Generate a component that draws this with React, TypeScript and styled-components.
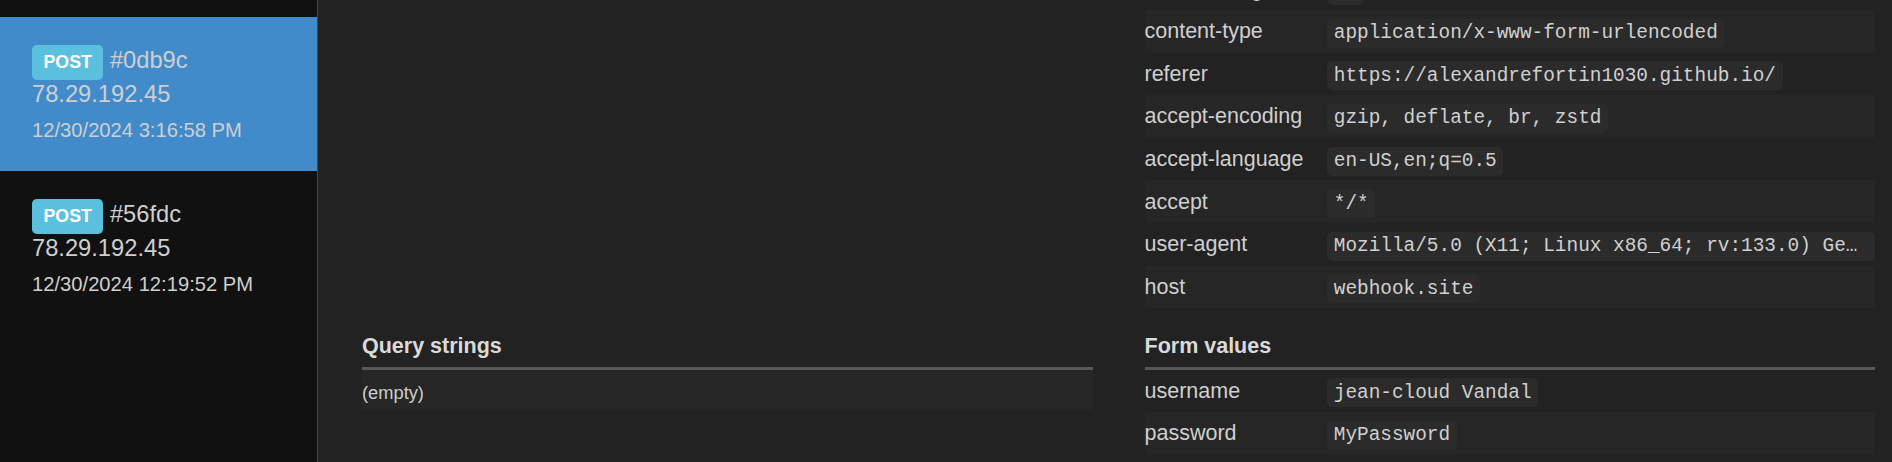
import React from "react";
import styled, { createGlobalStyle } from "styled-components";

const GlobalStyle = createGlobalStyle`
  html, body {
    margin: 0;
    padding: 0;
    background: #222;
  }
  body {
    font-family: "Liberation Sans", Arial, Helvetica, sans-serif;
    color: #ccc;
    overflow: hidden;
  }
`;

const Layout = styled.div`
  display: flex;
  width: 1892px;
  height: 462px;
  overflow: hidden;
`;

const Sidebar = styled.aside`
  box-sizing: border-box;
  width: 318px;
  flex: none;
  height: 100%;
  background: #111;
  border-right: 1px solid #474747;
  padding-top: 17px;
`;

const RequestItem = styled.a<{ $active?: boolean }>`
  display: block;
  box-sizing: border-box;
  height: 154px;
  padding: 28px 0 0 32px;
  background: ${(p) => (p.$active ? "#428bca" : "transparent")};
  color: #cfcfcf;
  text-decoration: none;
`;

const ItemHead = styled.div`
  display: flex;
  align-items: baseline;
  gap: 6.5px;
`;

const MethodBadge = styled.span`
  display: inline-block;
  height: 35px;
  line-height: 35px;
  padding: 0 11.5px;
  border-radius: 4.8px;
  background: #5bc0de;
  color: #fff;
  font-weight: bold;
  font-size: 17.8px;
`;

const RequestId = styled.span`
  font-size: 23.7px;
  line-height: 1;
`;

const RequestIp = styled.div`
  font-size: 23.7px;
  line-height: 28px;
`;

const RequestDate = styled.div`
  font-size: 20.2px;
  line-height: 28px;
  margin-top: 7.6px;
`;

const Main = styled.main`
  flex: 1;
  min-width: 0;
  height: 100%;
  background: #222;
  padding: 0 17px 0 44px;
  overflow: hidden;
`;

const DetailGrid = styled.div`
  display: grid;
  grid-template-columns: 1fr 1fr;
  column-gap: 52px;
  margin-top: -32.6px;
`;

const Section = styled.section`
  margin-top: 26.7px;
  min-width: 0;
`;

const SectionTitle = styled.h4`
  margin: 0;
  font-size: 21.5px;
  font-weight: bold;
  line-height: 23.65px;
  padding-bottom: 8.1px;
  border-bottom: 3px solid #585858;
  color: #dadada;
`;

const KvTable = styled.div`
  min-width: 0;
`;

const KvRow = styled.div`
  display: flex;
  align-items: flex-start;
  box-sizing: border-box;
  height: 42.6px;
  padding-top: 6.3px;
  &:nth-child(even) {
    background: #262626;
  }
`;

const KvKey = styled.div`
  flex: none;
  width: 182.7px;
  font-size: 21.5px;
  line-height: 30px;
  color: #cfcfcf;
`;

const KvValue = styled.div`
  flex: 1;
  min-width: 0;
  display: flex;
`;

const Code = styled.code`
  min-width: 0;
  margin-top: 2.5px;
  font-family: "Liberation Mono", "Courier New", monospace;
  font-size: 19.4px;
  line-height: 22px;
  padding: 3.5px 6.6px;
  border-radius: 5px;
  background: #2b2b2b;
  color: #d0d0d0;
  white-space: nowrap;
  overflow: hidden;
  text-overflow: ellipsis;
`;

const EmptyRow = styled.div`
  box-sizing: border-box;
  height: 40.7px;
  padding-top: 8.5px;
  background: #262626;
  font-size: 18.3px;
  line-height: 30px;
  color: #cfcfcf;
`;

type Req = { id: string; ip: string; date: string; active?: boolean };

const requests: Req[] = [
  { id: "#0db9c", ip: "78.29.192.45", date: "12/30/2024 3:16:58 PM", active: true },
  { id: "#56fdc", ip: "78.29.192.45", date: "12/30/2024 12:19:52 PM" },
];

const headers: [string, string][] = [
  ["content-length", "46"],
  ["content-type", "application/x-www-form-urlencoded"],
  ["referer", "https://alexandrefortin1030.github.io/"],
  ["accept-encoding", "gzip, deflate, br, zstd"],
  ["accept-language", "en-US,en;q=0.5"],
  ["accept", "*/*"],
  ["user-agent", "Mozilla/5.0 (X11; Linux x86_64; rv:133.0) Gecko/20100101 Firefox/133.0"],
  ["host", "webhook.site"],
];

const formValues: [string, string][] = [
  ["username", "jean-cloud Vandal"],
  ["password", "MyPassword"],
];

function KvList({ rows }: { rows: [string, string][] }) {
  return (
    <KvTable>
      {rows.map(([k, v]) => (
        <KvRow key={k}>
          <KvKey>{k}</KvKey>
          <KvValue>
            <Code>{v}</Code>
          </KvValue>
        </KvRow>
      ))}
    </KvTable>
  );
}

export default function App() {
  return (
    <>
      <GlobalStyle />
      <Layout>
        <Sidebar>
          {requests.map((r) => (
            <RequestItem key={r.id} $active={r.active}>
              <ItemHead>
                <MethodBadge>POST</MethodBadge>
                <RequestId>{r.id}</RequestId>
              </ItemHead>
              <RequestIp>{r.ip}</RequestIp>
              <RequestDate>{r.date}</RequestDate>
            </RequestItem>
          ))}
        </Sidebar>
        <Main>
          <DetailGrid>
            <div />
            <KvList rows={headers} />
            <Section>
              <SectionTitle>Query strings</SectionTitle>
              <EmptyRow>(empty)</EmptyRow>
            </Section>
            <Section>
              <SectionTitle>Form values</SectionTitle>
              <KvList rows={formValues} />
            </Section>
          </DetailGrid>
        </Main>
      </Layout>
    </>
  );
}
